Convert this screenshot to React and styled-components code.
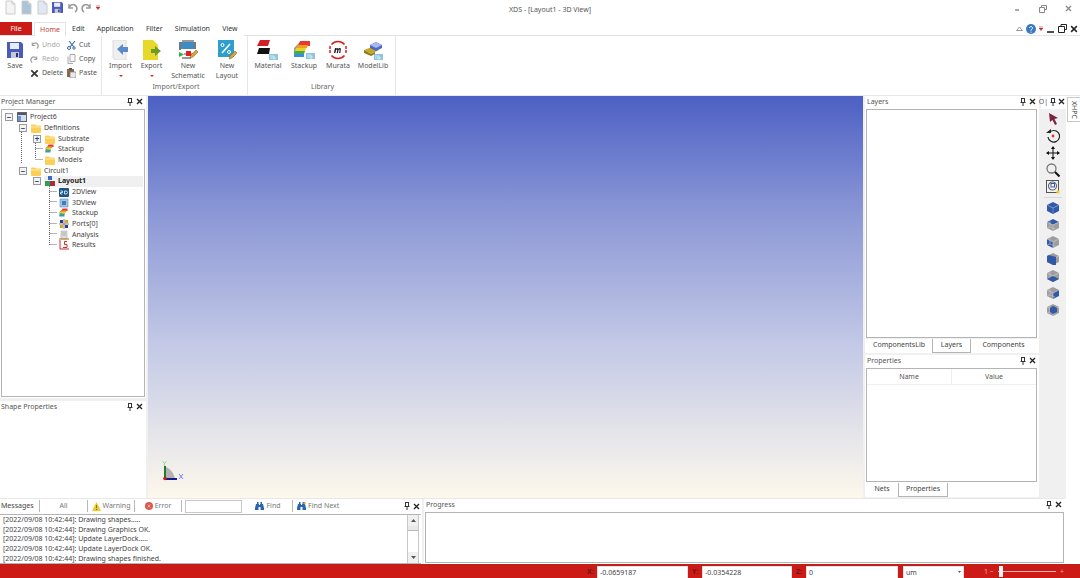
import React from 'react';
import styled, { createGlobalStyle } from 'styled-components';

const Global = createGlobalStyle`
  html, body { margin: 0; padding: 0; background: #fff; }
  * { box-sizing: border-box; }
  #root { width: 1080px; height: 578px; overflow: hidden; }
`;

const Page = styled.div`
  width: 1080px;
  height: 578px;
  display: flex;
  flex-direction: column;
  overflow: hidden;
  background: #fff;
  font-family: "Noto Sans", "Liberation Sans", sans-serif;
  font-size: 7px;
  line-height: 10px;
  color: #444;
  white-space: nowrap;
`;

const Svg = styled.svg`
  display: block;
  flex: none;
`;

/* title bar */
const TitleBar = styled.div`
  height: 22px;
  display: grid;
  grid-template-columns: 1fr auto 1fr;
  align-items: start;
`;
const Qat = styled.div`
  display: flex;
  align-items: center;
  gap: 3px;
  padding: 0 0 0 4px;
  height: 15px;
`;
const Title = styled.div`
  padding: 5px 0 0 20px;
  color: #555;
`;
const WindowButtons = styled.div`
  display: flex;
  justify-content: flex-end;
  gap: 18px;
  padding: 5px 8px 0 0;
`;

/* tabs */
const TabRow = styled.div`
  height: 14px;
  display: flex;
  align-items: stretch;
  border-bottom: 1px solid #e3e3e3;
`;
const FileTab = styled.div`
  width: 32px;
  background: #cc1b16;
  color: #fff;
  text-align: center;
  line-height: 13px;
  margin-right: 2px;
`;
const Tab = styled.div`
  padding: 0 6px;
  margin-right: .25px;
  line-height: 14px;
  height: 14px;
  color: #333;
  background: #fff;
`;
const ActiveTab = styled(Tab)`
  width: 32px;
  padding: 0;
  margin-right: 0;
  text-align: center;
  line-height: 13px;
  color: #c43c36;
  border: 1px solid #e3e3e3;
  border-bottom: 0;
`;
const HelpCluster = styled.div`
  margin-left: auto;
  display: flex;
  align-items: center;
  gap: 3px;
  padding-right: 2px;
  height: 13px;
`;

/* ribbon */
const Ribbon = styled.div`
  height: 59px;
  display: flex;
  background: #fff;
`;
const Group = styled.div`
  width: ${p => p.$w}px;
  display: flex;
  flex-direction: column;
  border-right: 1px solid #e6e6e6;
  padding-left: ${p => p.$pad || 0}px;
`;
const GroupBody = styled.div`
  flex: 1;
  display: flex;
`;
const GroupLabel = styled.div`
  height: 13px;
  text-align: center;
  color: #666;
`;
const LargeBtn = styled.div`
  width: ${p => p.$w}px;
  display: flex;
  flex-direction: column;
  align-items: center;
  padding-top: 3px;
  text-align: center;
  line-height: 9.5px;
  color: #555;
`;
const IconBox = styled.div`
  height: 22px;
  display: flex;
  align-items: center;
  justify-content: center;
`;
const Caret = styled.div`
  width: 0;
  height: 0;
  margin-top: 4px;
  border-left: 2px solid transparent;
  border-right: 2px solid transparent;
  border-top: 2px solid #c33;
`;
const SmallCol = styled.div`
  width: ${p => p.$w}px;
  display: flex;
  flex-direction: column;
  padding-top: 4px;
  gap: 4px;
`;
const SmallBtn = styled.div`
  height: 10px;
  display: flex;
  align-items: center;
  gap: 3px;
  color: ${p => (p.$off ? '#a8a8a8' : '#555')};
`;

/* main area */
const Main = styled.div`
  height: 403px;
  display: flex;
  background: #f0f0f0;
  border-top: 1px solid #e8e8e8;
`;
const SideCol = styled.div`
  width: ${p => p.$w}px;
  flex: none;
  display: flex;
  flex-direction: column;
`;
const Panel = styled.div`
  ${p => (p.$h ? `height: ${p.$h}px; flex: none;` : 'flex: 1; min-height: 0;')}
  margin-top: ${p => p.$mt || 0}px;
  margin-bottom: ${p => p.$mb || 0}px;
  display: flex;
  flex-direction: column;
  background: #fff;
`;
const PanelHeader = styled.div`
  height: 13px;
  flex: none;
  display: flex;
  align-items: center;
  padding: 0 3px 2px ${p => p.$pl || 1}px;
  color: #555;
  background: #fff;
  gap: 3px;
`;
const HeaderText = styled.span`
  flex: 1;
`;
const PanelBox = styled.div`
  flex: 1;
  min-height: 0;
  margin: ${p => p.$m || '0 1px 1px 1px'};
  border: 1px solid #b4b4b4;
  background: #fff;
  position: relative;
`;
const Viewport = styled.div`
  width: 715px;
  flex: none;
  margin: 0 2px;
  position: relative;
  background: linear-gradient(180deg, #4c60c4 0%, #8d99d6 30%, #c3c9e6 62%, #fdf8ec 100%);
`;
const AxisMark = styled.div`
  position: absolute;
  left: 13px;
  bottom: 15px;
`;

/* tree */
const Tree = styled.div`
  display: flex;
  flex-direction: column;
  padding-top: 2px;
`;
const Row = styled.div`
  height: 10.67px;
  display: flex;
  align-items: center;
  padding-left: ${p => 3 + p.$level * 14}px;
  margin-right: 1px;
  color: ${p => (p.$bold ? '#222' : '#444')};
  font-weight: ${p => (p.$bold ? 700 : 400)};
  background: ${p => (p.$bold ? 'linear-gradient(90deg, #fff 0, #fff 42px, #f0f0f0 42px)' : 'transparent')};
`;
const Expander = styled.div`
  width: 8px;
  height: 8px;
  flex: none;
  border: 1px solid #9a9a9a;
  background: #f4f4f4;
  display: flex;
  align-items: center;
  justify-content: center;
  color: #1f3f90;
  font-size: 8px;
  line-height: 6px;
  position: relative;
  z-index: 1;
  font-weight: 700;
  visibility: ${p => (p.$hide ? 'hidden' : 'visible')};
`;
const RowIcon = styled.div`
  width: 10px;
  height: 10px;
  flex: none;
  margin: 0 3px 0 4px;
  position: relative;
  z-index: 1;
`;
const Guides = styled.svg`
  position: absolute;
  left: 0;
  top: 0;
`;

/* right side tabs */
const DockTabs = styled.div`
  height: 14px;
  flex: none;
  display: flex;
  padding-left: 1px;
  background: #fff;
`;
const DockTab = styled.div`
  width: ${p => p.$w}px;
  text-align: center;
  line-height: 12px;
  color: #444;
  ${p => p.$on && 'border: 1px solid #b4b4b4; border-top: 0; background: #fff;'}
`;
const TableHead = styled.div`
  height: 16px;
  display: flex;
  border-bottom: 1px solid #efefef;
`;
const TableCell = styled.div`
  flex: 1;
  text-align: center;
  line-height: 16px;
  color: #555;
  & + & { border-left: 1px solid #efefef; }
`;

const ToolCol = styled.div`
  width: 25px;
  flex: none;
  margin-left: 2px;
  display: flex;
  flex-direction: column;
  background: #f0f0f0;
`;
const ToolHeader = styled.div`
  height: 13px;
  display: flex;
  align-items: center;
  justify-content: flex-end;
  gap: 2px;
  padding: 0 1px 2px 2px;
  background: #fff;
  color: #555;
`;
const ToolTitle = styled.span`
  margin-right: auto;
`;
const ToolList = styled.div`
  display: flex;
  flex-direction: column;
  align-items: center;
  padding: 3px 1px 0 0;
  gap: 3px;
`;
const ToolRule = styled.div`
  width: 18px;
  height: 1px;
  background: #d8d8d8;
`;
const SideStrip = styled.div`
  flex: 1;
  background: #fff;
  padding: 1px 0 0 1px;
`;
const VerticalTab = styled.div`
  height: 25px;
  border: 1px solid #c8c8c8;
  border-right: 0;
  writing-mode: vertical-rl;
  text-align: center;
  line-height: 12px;
  font-size: 7px;
  color: #444;
`;

/* bottom docks */
const Bottom = styled.div`
  height: 66px;
  display: flex;
  background: #f0f0f0;
  width: 1065px;
  border-top: 1px solid #e8e8e8;
`;
const MessagesDock = styled.div`
  width: 422px;
  flex: none;
  display: flex;
  flex-direction: column;
  margin-right: 2px;
  background: #fff;
`;
const MsgBar = styled.div`
  height: 15px;
  flex: none;
  display: flex;
  align-items: center;
  background: #fff;
  padding-bottom: 1px;
`;
const MsgBtn = styled.div`
  width: ${p => p.$w}px;
  height: 12px;
  flex: none;
  display: flex;
  align-items: center;
  justify-content: ${p => (p.$left ? 'flex-start' : 'center')};
  gap: 2px;
  padding-left: ${p => p.$pl || 0}px;
  border-right: 1px solid #b8b8b8;
  color: ${p => (p.$dim ? '#777' : '#444')};
  ${p => p.$plain && 'border-right: 0;'}
`;
const FindBox = styled.div`
  width: 57px;
  height: 13px;
  flex: none;
  margin: 0 2px 0 3px;
  border: 1px solid #c8c8c8;
  background: #fff;
`;
const MsgActions = styled.div`
  margin-left: auto;
  display: flex;
  align-items: center;
  gap: 3px;
  padding-right: 2px;
`;
const LogArea = styled.div`
  flex: 1;
  min-height: 0;
  display: flex;
  border-top: 1px solid #b4b4b4;
  border-bottom: 1px solid #b4b4b4;
  margin-right: 1px;
`;
const LogList = styled.div`
  flex: 1;
  padding: 0 0 0 3px;
  line-height: 9.7px;
  color: #444;
  overflow: hidden;
`;
const ScrollBar = styled.div`
  width: 12px;
  flex: none;
  display: flex;
  flex-direction: column;
  border: 1px solid #c8c8c8;
  border-width: 0 1px;
  margin-right: 2px;
  background: #fff;
`;
const ScrollArrow = styled.div`
  height: 11px;
  background: #f0f0f0;
  display: flex;
  align-items: center;
  justify-content: center;
`;
const ScrollThumb = styled.div`
  height: 5px;
  background: #e8e8e8;
  border-bottom: 1px solid #bbb;
`;
const ScrollSpace = styled.div`
  flex: 1;
`;

/* status bar */
const Status = styled.div`
  height: 14px;
  flex: none;
  display: flex;
  align-items: flex-start;
  padding: 1px 0 0 587px;
  background: #cc1b16;
  border-top: 1px solid #b8221d;
  overflow: hidden;
`;
const FieldLabel = styled.span`
  width: 10px;
  flex: none;
  color: #6d1512;
  font-weight: 700;
  line-height: 12px;
`;
const Field = styled.div`
  width: ${p => p.$w}px;
  height: 14px;
  flex: none;
  margin-right: ${p => p.$mr}px;
  padding-left: 2px;
  background: #fff;
  border: 1px solid #e3e3e3;
  display: flex;
  justify-content: space-between;
  color: #444;
  line-height: 11px;
`;
const ZoomLabel = styled.span`
  color: #f0a6a3;
  line-height: 11px;
  width: ${p => p.$w}px;
  flex: none;
  text-align: ${p => p.$align || 'left'};
`;
const SliderTrack = styled.div`
  width: 58px;
  height: 1px;
  margin-top: 5px;
  flex: none;
  background: #f0b4b1;
  position: relative;
`;
const SliderThumb = styled.div`
  position: absolute;
  left: 1px;
  top: -5px;
  width: 4px;
  height: 11px;
  background: #f4f4f4;
`;

/* ---- icons ---- */
const Pin = () => (
  <Svg width="6" height="8" viewBox="0 0 6 8">
    <path d="M1 .5h4M1.500.5v4M4.500.5v4M.5 4.500h5M3 4.500V8" stroke="#333" fill="none" />
  </Svg>
);
const Close = ({ c = '#222', s = 7 }) => (
  <Svg width={s} height={s} viewBox="0 0 7 7">
    <path d="M1 1l5 5M6 1L1 6" stroke={c} strokeWidth="1.300" />
  </Svg>
);
const PanelTools = () => (
  <>
    <Pin />
    <Close />
  </>
);

const DocIcon = ({ fold = '#f4f4f4' }) => (
  <Svg width="13" height="15" viewBox="0 0 13 15">
    <path d="M2 1h6l3 3v10H2z" fill={fold} stroke="#ccc" />
    <path d="M8 1v3h3" fill="#ddd" stroke="#ccc" />
  </Svg>
);
const Floppy = ({ s = 13 }) => (
  <Svg width={s} height={s} viewBox="0 0 16 16">
    <path d="M0 0h14l2 2v14H0z" fill="#4a5cb8" />
    <path d="M3 1h9v6H3z" fill="#e8ecf7" />
    <path d="M4 10h8v6H4z" fill="#c4c8d8" />
    <path d="M9 11h2v4H9z" fill="#2a3470" />
  </Svg>
);
const UndoIcon = ({ flip, c = '#999', s = 12 }) => (
  <Svg width={s} height={s} viewBox="0 0 12 12" style={flip ? { transform: 'scaleX(-1)' } : undefined}>
    <path d="M3 2v4h4" fill="none" stroke={c} strokeWidth="1.300" />
    <path d="M3 6a4 4 0 1 1 6 4" fill="none" stroke={c} strokeWidth="1.600" />
  </Svg>
);
const TinyCaret = () => (
  <Svg width="4" height="5" viewBox="0 0 4 5">
    <path d="M0 0h4M0 2h4L2 4.500z" stroke="#b33" strokeWidth=".6" fill="#b33" />
  </Svg>
);
const ScissorsIcon = () => (
  <Svg width="9" height="9" viewBox="0 0 9 9">
    <path d="M8 0L3 6M2 0l5 6" stroke="#3a6aa8" strokeWidth="1.100" fill="none" />
    <circle cx="2" cy="7" r="1.500" fill="none" stroke="#3a6aa8" />
    <circle cx="7" cy="7" r="1.200" fill="none" stroke="#3a6aa8" />
  </Svg>
);
const CopyIcon = () => (
  <Svg width="9" height="10" viewBox="0 0 9 10">
    <path d="M3 .5h5v7H3zM1 2.500v7h5" fill="#f6f6f6" stroke="#aaa" />
  </Svg>
);
const PasteIcon = () => (
  <Svg width="9" height="10" viewBox="0 0 9 10">
    <path d="M0 1h7v8H0z" fill="#8a6a4a" />
    <path d="M3 4h6v6H3z" fill="#e8e8f0" stroke="#667" strokeWidth=".6" />
    <path d="M2 0h3v2H2z" fill="#555" />
  </Svg>
);
const DeleteX = () => <Close c="#333" s={9} />;

const ImportIcon = () => (
  <Svg width="17" height="20" viewBox="0 0 17 20">
    <path d="M1 0h13v20H3l-2-2z" fill="#efefef" stroke="#dcdcdc" />
    <path d="M5 9l6-5v3h5v5h-5v3z" fill="#5b8bc8" />
  </Svg>
);
const ExportIcon = () => (
  <Svg width="18" height="20" viewBox="0 0 18 20">
    <path d="M0 0h10l5 5v15H0z" fill="#e6d92a" />
    <path d="M8 9h4V6l6 5-6 5v-3H8z" fill="#6e9a2c" />
  </Svg>
);
const Pencil = ({ x, y }) => (
  <path transform={`translate(${x} ${y})`} d="M0 8l1-3 5-5 2 2-5 5z" fill="#e0a040" stroke="#7a5a20" strokeWidth=".5" />
);
const SchematicIcon = () => (
  <Svg width="19" height="20" viewBox="0 0 19 20">
    <path d="M3 0h12v2H3z" fill="#999" />
    <path d="M2 2h13v7H2z" fill="#3f8cc4" />
    <path d="M0 2h2v8H0zM15 2h2v7h-2z" fill="#777" />
    <path d="M0 12l5 2.500-5 2.500z" fill="#30b050" />
    <path d="M7 11h5v5H7z" fill="#e02020" />
    <path d="M5 14h2M12 14h2" stroke="#555" />
    <path d="M3 17h9v2H3z" fill="#999" />
    <Pencil x={11} y={10} />
  </Svg>
);
const LayoutIcon = () => (
  <Svg width="19" height="20" viewBox="0 0 19 20">
    <path d="M0 0h16v17H0z" fill="#2e9ecf" />
    <path d="M4 13l8-9" stroke="#fff" strokeWidth="1.600" />
    <circle cx="4.500" cy="5" r="1.500" fill="none" stroke="#fff" />
    <circle cx="11" cy="12" r="1.500" fill="none" stroke="#fff" />
    <Pencil x={11} y={11} />
  </Svg>
);
const LibTag = ({ x, y }) => (
  <>
    <rect x={x} y={y} width="9" height="6" fill="#8fc6dd" />
    <path d={`M${x + 2} ${y + 1}v4M${x + 4} ${y + 1}v4h2v-2h-2`} stroke="#fff" strokeWidth=".6" fill="none" />
  </>
);
const MaterialIcon = () => (
  <Svg width="22" height="20" viewBox="0 0 22 20">
    <path d="M3 0h10l-2 6H0z" fill="#cf1f28" />
    <path d="M2 8h11l-1 6H0z" fill="#111" />
    <LibTag x={12} y={14} />
  </Svg>
);
const StackIcon = ({ s = 22, tag = true }) => (
  <Svg width={s} height={(s * 20) / 22} viewBox="0 0 22 20">
    <path d="M1 8l6-6v12l-6 3z" fill="#999" />
    <path d="M7 1h10v5H5z" fill="#e63a30" />
    <path d="M5 5h10l-1 3H3z" fill="#f0a020" />
    <path d="M3 8h10l-1 3H2z" fill="#f0d020" />
    <path d="M2 11h10l-1 3H1z" fill="#3cb050" />
    <path d="M1 14h10v3H1z" fill="#3f8cd8" />
    {tag && <LibTag x={13} y={13} />}
  </Svg>
);
const MurataIcon = () => (
  <Svg width="20" height="20" viewBox="0 0 20 20">
    <path d="M3.500 4.500a8.500 8.500 0 0 1 13 0M16.500 15.500a8.500 8.500 0 0 1-13 0" fill="none" stroke="#d92020" strokeWidth="1.500" />
    <path d="M2 6v8M18 6v8" stroke="#d92020" strokeWidth="1.500" strokeDasharray="3 1" />
    <path d="M6 13l1-5h1l-.3 1c1-1.300 2.300-1.300 2.300 0 1-1.300 3-1.300 2.800.4L12.300 13h-1.200l.6-3c0-.6-1-.5-1.300.3L9.900 13H8.700l.6-3c0-.6-1-.5-1.300.3L7.300 13z" fill="#111" />
  </Svg>
);
const ModelLibIcon = () => (
  <Svg width="22" height="20" viewBox="0 0 22 20">
    <path d="M2 10l8-3 7 3-8 4z" fill="#c8a820" />
    <path d="M2 10v3l7 3v-2zM9 14v2l4-2v-2z" fill="#8a7a20" />
    <path d="M8 5l6-3 6 3v3l-6 3-6-3z" fill="#4a6ac8" />
    <path d="M8 5l6 3 6-3-6-3z" fill="#a8b8e8" />
    <LibTag x={12} y={14} />
  </Svg>
);

const Folder = () => (
  <Svg width="10" height="9" viewBox="0 0 10 9" style={{ marginTop: 1 }}>
    <path d="M0 1.500a1 1 0 0 1 1-1h3l1 1h4a1 1 0 0 1 1 1V8a1 1 0 0 1-1 1H1a1 1 0 0 1-1-1z" fill="#fbcf55" />
    <path d="M0 3h10" stroke="#fde9a8" />
  </Svg>
);
const ProjectIcon = () => (
  <Svg width="10" height="10" viewBox="0 0 10 10">
    <rect x=".5" y=".5" width="9" height="9" fill="#cfe0f2" stroke="#667" />
    <path d="M1 1h8v2H1z" fill="#556" />
    <path d="M1 4h3v5H1z" fill="#6a92cc" />
  </Svg>
);
const LayoutTree = () => (
  <Svg width="10" height="10" viewBox="0 0 10 10">
    <path d="M3 0h4v4H3z" fill="#3a6ac8" />
    <path d="M0 5h5v5H0z" fill="#3c9a50" />
    <path d="M5 5h5v5H5z" fill="#a03040" />
  </Svg>
);
const TwoD = () => (
  <Svg width="10" height="9" viewBox="0 0 10 9" style={{ marginTop: 1 }}>
    <rect width="10" height="9" rx="1" fill="#14558c" />
    <path d="M1.500 3h2v1.500h-2v1.500h2M5.500 3v3h1.500a1.500 1.500 0 0 0 0-3z" stroke="#fff" strokeWidth=".8" fill="none" />
  </Svg>
);
const ThreeD = () => (
  <Svg width="10" height="10" viewBox="0 0 10 10">
    <path d="M1 1h8v8H1z" fill="#9ec4e6" stroke="#6a8aa8" strokeWidth=".6" />
    <rect x="3" y="3" width="4" height="4" fill="#3f78c4" />
  </Svg>
);
const PortsIcon = () => (
  <Svg width="10" height="10" viewBox="0 0 10 10">
    <path d="M1 1h3v3H1z" fill="#2a3a9a" />
    <path d="M6 1h3v3H6z" fill="#d8a820" />
    <path d="M1 6h3v3H1z" fill="#d8a820" />
    <path d="M6 6h3v3H6z" fill="#2a3a9a" />
    <path d="M0 5h10M5 0v10" stroke="#666" strokeWidth=".8" />
  </Svg>
);
const AnalysisIcon = () => (
  <Svg width="10" height="10" viewBox="0 0 10 10">
    <path d="M2 1h6v8H2z" fill="#ddd" stroke="#aaa" strokeWidth=".6" />
    <path d="M3 3h4M3 5h4" stroke="#999" strokeWidth=".7" />
    <path d="M0 9h10" stroke="#b08a40" strokeWidth="1.200" />
  </Svg>
);
const ResultsIcon = () => (
  <Svg width="10" height="10" viewBox="0 0 10 10">
    <path d="M1 0v9h9" stroke="#d03030" fill="none" />
    <path d="M8 1.500H5.500v3H8v3H4" stroke="#d03030" fill="none" />
  </Svg>
);

const Cube = ({ face }) => {
  const on = f => (face === 'all' || face === f ? '#3159a8' : '#9d9d9d');
  return (
    <Svg width="14" height="14" viewBox="0 0 14 14">
      <path d="M7 1l6 3-6 3-6-3z" fill={on('top')} />
      <path d="M1 4l6 3v6l-6-3z" fill={on('left')} />
      <path d="M13 4v6l-6 3V7z" fill={on('right')} />
      {face === 'all' ? (
        <path d="M7 7v5M7 7L2 4.500M7 7l5-2.500" stroke="#8fa6d8" strokeWidth=".6" />
      ) : (
        <path d="M7 7v6M7 7L1 4M7 7l6-3M4 3v6l-3 1M4 9l5 2" stroke="#c8c8c8" strokeWidth=".6" fill="none" />
      )}
      {face === 'front' && <path d="M1 4l2-1 7 2v8l-3 0-6-3z" fill="#3159a8" />}
      {face === 'back' && <path d="M7 3l4 2v4l-4 2-3-2V5z" fill="#3159a8" />}
      {face === 'bottom' && <path d="M1 10l6-3 6 3-6 3z" fill="#3159a8" />}
    </Svg>
  );
};
const ArrowTool = () => (
  <Svg width="14" height="14" viewBox="0 0 14 14">
    <path d="M3 1l9 5-3.500 1L11 12l-2 1-2.500-5L4 10z" fill="#7a2440" />
  </Svg>
);
const RotateTool = () => (
  <Svg width="14" height="14" viewBox="0 0 14 14">
    <path d="M3 4a5.800 5.800 0 1 1-1 4" fill="none" stroke="#222" strokeWidth="1.200" />
    <path d="M0 4h5V0z" fill="#222" />
    <circle cx="7" cy="7" r="1.400" fill="#e83030" />
  </Svg>
);
const MoveTool = () => (
  <Svg width="14" height="14" viewBox="0 0 14 14">
    <path d="M7 1v12M1 7h12" stroke="#111" strokeWidth="1" />
    <path d="M7 0l2 3H5zM7 14l2-3H5zM0 7l3-2v4zM14 7l-3-2v4z" fill="#111" />
  </Svg>
);
const ZoomTool = () => (
  <Svg width="14" height="14" viewBox="0 0 14 14">
    <circle cx="5.500" cy="5.500" r="4.500" fill="#f0f0f0" stroke="#777" strokeWidth="1.300" />
    <path d="M9 9l4.500 4.500" stroke="#111" strokeWidth="2" />
  </Svg>
);
const ZoomFitTool = () => (
  <Svg width="14" height="14" viewBox="0 0 14 14">
    <rect x=".5" y=".5" width="12" height="12" fill="#f4f4f4" stroke="#555" />
    <circle cx="6.500" cy="6" r="4" fill="#fff" stroke="#666" strokeWidth="1.200" />
    <rect x="5" y="3.500" width="3.500" height="3.500" fill="none" stroke="#3050c0" />
    <circle cx="12" cy="12" r="1.700" fill="#e8d820" />
  </Svg>
);

const WarnIcon = () => (
  <Svg width="9" height="9" viewBox="0 0 9 9">
    <path d="M4.500 0L9 9H0z" fill="#f2c72c" />
    <path d="M4.500 3v3.200M4.500 7v1" stroke="#7a5a00" strokeWidth=".8" />
  </Svg>
);
const ErrorIcon = () => (
  <Svg width="8" height="8" viewBox="0 0 8 8">
    <circle cx="4" cy="4" r="4" fill="#d95a4e" />
    <path d="M2.500 2.500l3 3M5.500 2.500l-3 3" stroke="#f6c8c2" strokeWidth=".7" />
  </Svg>
);
const Binoculars = ({ dot }) => (
  <Svg width="9" height="8" viewBox="0 0 9 8">
    <path d="M1 2h3v1h1V2h3l1 4v2H5.500V5h-2v3H0V6z" fill="#2a66b0" />
    <path d="M2 0h1.500v2H2zM5.500 0H7v2H5.500z" fill="#2a66b0" />
    {dot && <circle cx="7.500" cy="1" r="1.200" fill="#e89a30" />}
  </Svg>
);
const Triangle = ({ up }) => (
  <Svg width="5" height="3" viewBox="0 0 5 3">
    <path d={up ? 'M2.500 0L5 3H0z' : 'M0 0h5L2.500 3z'} fill="#555" />
  </Svg>
);
const Axis = () => (
  <Svg width="26" height="22" viewBox="0 0 26 22">
    <path d="M4 18V6c5 1 9 6 10 12z" fill="#999" opacity=".7" />
    <path d="M4 17V5" stroke="#1f7a30" strokeWidth="2" />
    <path d="M4 18h12" stroke="#1a1a90" strokeWidth="2" />
    <circle cx="4" cy="17.500" r="1.800" fill="#d01818" />
    <path d="M1.500 0l2 2.500 2-2.500M3.500 2.500V5" stroke="#6fe080" fill="none" strokeWidth=".8" />
    <path d="M18 13l4 5M22 13l-4 5" stroke="#6a70ff" strokeWidth=".9" />
  </Svg>
);

const treeRows = [
  { level: 0, label: 'Project6', exp: '−', icon: <ProjectIcon /> },
  { level: 1, label: 'Definitions', exp: '−', icon: <Folder /> },
  { level: 2, label: 'Substrate', exp: '+', icon: <Folder /> },
  { level: 2, label: 'Stackup', icon: <StackIcon s={11} tag={false} /> },
  { level: 2, label: 'Models', icon: <Folder /> },
  { level: 1, label: 'Circuit1', exp: '−', icon: <Folder /> },
  { level: 2, label: 'Layout1', exp: '−', icon: <LayoutTree />, bold: true },
  { level: 3, label: '2DView', icon: <TwoD /> },
  { level: 3, label: '3DView', icon: <ThreeD /> },
  { level: 3, label: 'Stackup', icon: <StackIcon s={11} tag={false} /> },
  { level: 3, label: 'Ports[0]', icon: <PortsIcon /> },
  { level: 3, label: 'Analysis', icon: <AnalysisIcon /> },
  { level: 3, label: 'Results', icon: <ResultsIcon /> },
];

const logLines = [
  '[2022/09/08 10:42:44]: Drawing shapes.....',
  '[2022/09/08 10:42:44]: Drawing Graphics OK.',
  '[2022/09/08 10:42:44]: Update LayerDock.....',
  '[2022/09/08 10:42:44]: Update LayerDock OK.',
  '[2022/09/08 10:42:44]: Drawing shapes finished.',
];

const cubeFaces = ['all', 'top', 'left', 'front', 'bottom', 'right', 'back'];

const TreeGuides = () => (
  <Guides width="80" height="150">
    <path
      d="M19.500 22v31M33.500 31v18M33.500 38.500h8M33.500 49.500h8M47.500 74v61M47.500 81.500h8M47.500 91.500h8M47.500 102.500h8M47.500 113.500h8M47.500 123.500h8M47.500 134.500h8"
      stroke="#666"
      strokeDasharray="1 1"
      fill="none"
    />
  </Guides>
);

const LargeButton = ({ w, icon, caret, children }) => (
  <LargeBtn $w={w}>
    <IconBox>{icon}</IconBox>
    <div>{children}</div>
    {caret && <Caret />}
  </LargeBtn>
);

export default function App() {
  return (
    <Page>
      <Global />
      <TitleBar>
        <Qat>
          <DocIcon />
          <DocIcon fold="#a9c4d8" />
          <DocIcon fold="#dfe8f4" />
          <Floppy s={11} />
          <UndoIcon />
          <UndoIcon flip />
          <TinyCaret />
        </Qat>
        <Title>XDS - [Layout1 - 3D View]</Title>
        <WindowButtons>
          <Svg width="8" height="8" viewBox="0 0 8 8"><path d="M2 5h4" stroke="#555" /></Svg>
          <Svg width="8" height="8" viewBox="0 0 8 8"><path d="M2.500 2.500v-2h5v4h-2M.5 2.500h5v5h-5z" fill="none" stroke="#888" /></Svg>
          <Close c="#888" />
        </WindowButtons>
      </TitleBar>

      <TabRow>
        <FileTab>File</FileTab>
        <ActiveTab>Home</ActiveTab>
        <Tab>Edit</Tab>
        <Tab>Application</Tab>
        <Tab>Filter</Tab>
        <Tab>Simulation</Tab>
        <Tab>View</Tab>
        <HelpCluster>
          <Svg width="7" height="5" viewBox="0 0 7 5"><path d="M.5 4.500L3.500 1l3 3.500z" fill="none" stroke="#999" /></Svg>
          <Svg width="10" height="10" viewBox="0 0 10 10">
            <circle cx="5" cy="5" r="5" fill="#3a7ac0" />
            <path d="M3.500 4a1.500 1.500 0 1 1 2.300 1.300C5 5.800 5 6 5 6.800M5 7.700v1" stroke="#fff" fill="none" />
          </Svg>
          <TinyCaret />
          <Svg width="9" height="9" viewBox="0 0 9 9"><path d="M1 8h7" stroke="#222" strokeWidth="1.600" /></Svg>
          <Svg width="9" height="9" viewBox="0 0 9 9"><path d="M3 2V.5h5.500v5H7M.5 2.500H6.500v6H.5z" fill="none" stroke="#222" /></Svg>
          <Close s={8} />
        </HelpCluster>
      </TabRow>

      <Ribbon>
        <Group $w={102}>
          <GroupBody>
            <LargeButton w={30} icon={<Floppy s={16} />}>Save</LargeButton>
            <SmallCol $w={37}>
              <SmallBtn $off><UndoIcon s={9} />Undo</SmallBtn>
              <SmallBtn $off><UndoIcon s={9} flip />Redo</SmallBtn>
              <SmallBtn><DeleteX />Delete</SmallBtn>
            </SmallCol>
            <SmallCol $w={34}>
              <SmallBtn><ScissorsIcon />Cut</SmallBtn>
              <SmallBtn><CopyIcon />Copy</SmallBtn>
              <SmallBtn><PasteIcon />Paste</SmallBtn>
            </SmallCol>
          </GroupBody>
        </Group>
        <Group $w={146} $pad={3}>
          <GroupBody>
            <LargeButton w={31} icon={<ImportIcon />} caret>Import</LargeButton>
            <LargeButton w={31} icon={<ExportIcon />} caret>Export</LargeButton>
            <LargeButton w={42} icon={<SchematicIcon />}>New<br />Schematic</LargeButton>
            <LargeButton w={36} icon={<LayoutIcon />}>New<br />Layout</LargeButton>
          </GroupBody>
          <GroupLabel>Import/Export</GroupLabel>
        </Group>
        <Group $w={148} $pad={2}>
          <GroupBody>
            <LargeButton w={36} icon={<MaterialIcon />}>Material</LargeButton>
            <LargeButton w={36} icon={<StackIcon />}>Stackup</LargeButton>
            <LargeButton w={32} icon={<MurataIcon />}>Murata</LargeButton>
            <LargeButton w={38} icon={<ModelLibIcon />}>ModelLib</LargeButton>
          </GroupBody>
          <GroupLabel>Library</GroupLabel>
        </Group>
      </Ribbon>

      <Main>
        <SideCol $w={146}>
          <Panel $mb={3}>
            <PanelHeader>
              <HeaderText>Project Manager</HeaderText>
              <PanelTools />
            </PanelHeader>
            <PanelBox>
              <TreeGuides />
              <Tree>
                {treeRows.map((r, i) => (
                  <Row key={i} $level={r.level} $bold={r.bold}>
                    <Expander $hide={!r.exp}>{r.exp}</Expander>
                    <RowIcon>{r.icon}</RowIcon>
                    {r.label}
                  </Row>
                ))}
              </Tree>
            </PanelBox>
          </Panel>
          <Panel $h={97}>
            <PanelHeader>
              <HeaderText>Shape Properties</HeaderText>
              <PanelTools />
            </PanelHeader>
          </Panel>
        </SideCol>

        <Viewport>
          <AxisMark><Axis /></AxisMark>
        </Viewport>

        <SideCol $w={174}>
          <Panel $h={242} $mb={1}>
            <PanelHeader $pl={2}>
              <HeaderText>Layers</HeaderText>
              <PanelTools />
            </PanelHeader>
            <PanelBox $m="0 2px 0 1px" />
          </Panel>
          <DockTabs>
            <DockTab $w={66}>ComponentsLib</DockTab>
            <DockTab $w={39} $on>Layers</DockTab>
            <DockTab $w={65}>Components</DockTab>
          </DockTabs>
          <Panel $mt={2} $mb={1}>
            <PanelHeader $pl={2}>
              <HeaderText>Properties</HeaderText>
              <PanelTools />
            </PanelHeader>
            <PanelBox $m="0 2px 1px 1px">
              <TableHead>
                <TableCell>Name</TableCell>
                <TableCell>Value</TableCell>
              </TableHead>
            </PanelBox>
            <DockTabs>
              <DockTab $w={32}>Nets</DockTab>
              <DockTab $w={50} $on>Properties</DockTab>
            </DockTabs>
          </Panel>
        </SideCol>

        <ToolCol>
          <ToolHeader>
            <ToolTitle>O|</ToolTitle>
            <PanelTools />
          </ToolHeader>
          <ToolList>
            <ArrowTool />
            <RotateTool />
            <MoveTool />
            <ZoomTool />
            <ZoomFitTool />
            <ToolRule />
            {cubeFaces.map(f => <Cube key={f} face={f} />)}
          </ToolList>
        </ToolCol>

        <SideStrip>
          <VerticalTab>XHPC</VerticalTab>
        </SideStrip>
      </Main>

      <Bottom>
        <MessagesDock>
          <MsgBar>
            <MsgBtn $w={40} $left $pl={1}>Messages</MsgBtn>
            <MsgBtn $w={48} $dim>All</MsgBtn>
            <MsgBtn $w={47} $dim><WarnIcon />Warning</MsgBtn>
            <MsgBtn $w={47} $dim><ErrorIcon />Error</MsgBtn>
            <FindBox />
            <MsgBtn $w={49} $dim><Binoculars />Find</MsgBtn>
            <MsgBtn $w={50} $plain $dim $left $pl={4}><Binoculars dot />Find Next</MsgBtn>
            <MsgActions><PanelTools /></MsgActions>
          </MsgBar>
          <LogArea>
            <LogList>
              {logLines.map((l, i) => <div key={i}>{l}</div>)}
            </LogList>
            <ScrollBar>
              <ScrollArrow><Triangle up /></ScrollArrow>
              <ScrollThumb />
              <ScrollSpace />
              <ScrollArrow><Triangle /></ScrollArrow>
            </ScrollBar>
          </LogArea>
        </MessagesDock>
        <Panel>
          <PanelHeader $pl={2}>
            <HeaderText>Progress</HeaderText>
            <PanelTools />
          </PanelHeader>
          <PanelBox $m="0 1px 1px 1px" />
        </Panel>
      </Bottom>

      <Status>
        <FieldLabel>X:</FieldLabel>
        <Field $w={91} $mr={4}>-0.0659187</Field>
        <FieldLabel>Y:</FieldLabel>
        <Field $w={90} $mr={4}>-0.0354228</Field>
        <FieldLabel>Z:</FieldLabel>
        <Field $w={92} $mr={5}>0</Field>
        <Field $w={61} $mr={20}>um<Svg width="6" height="10" viewBox="0 0 6 10"><path d="M1 4h3L2.500 6z" fill="#555" /></Svg></Field>
        <ZoomLabel $w={14}>1 −</ZoomLabel>
        <SliderTrack><SliderThumb /></SliderTrack>
        <ZoomLabel $w={8} $align="right">+</ZoomLabel>
      </Status>
    </Page>
  );
}
